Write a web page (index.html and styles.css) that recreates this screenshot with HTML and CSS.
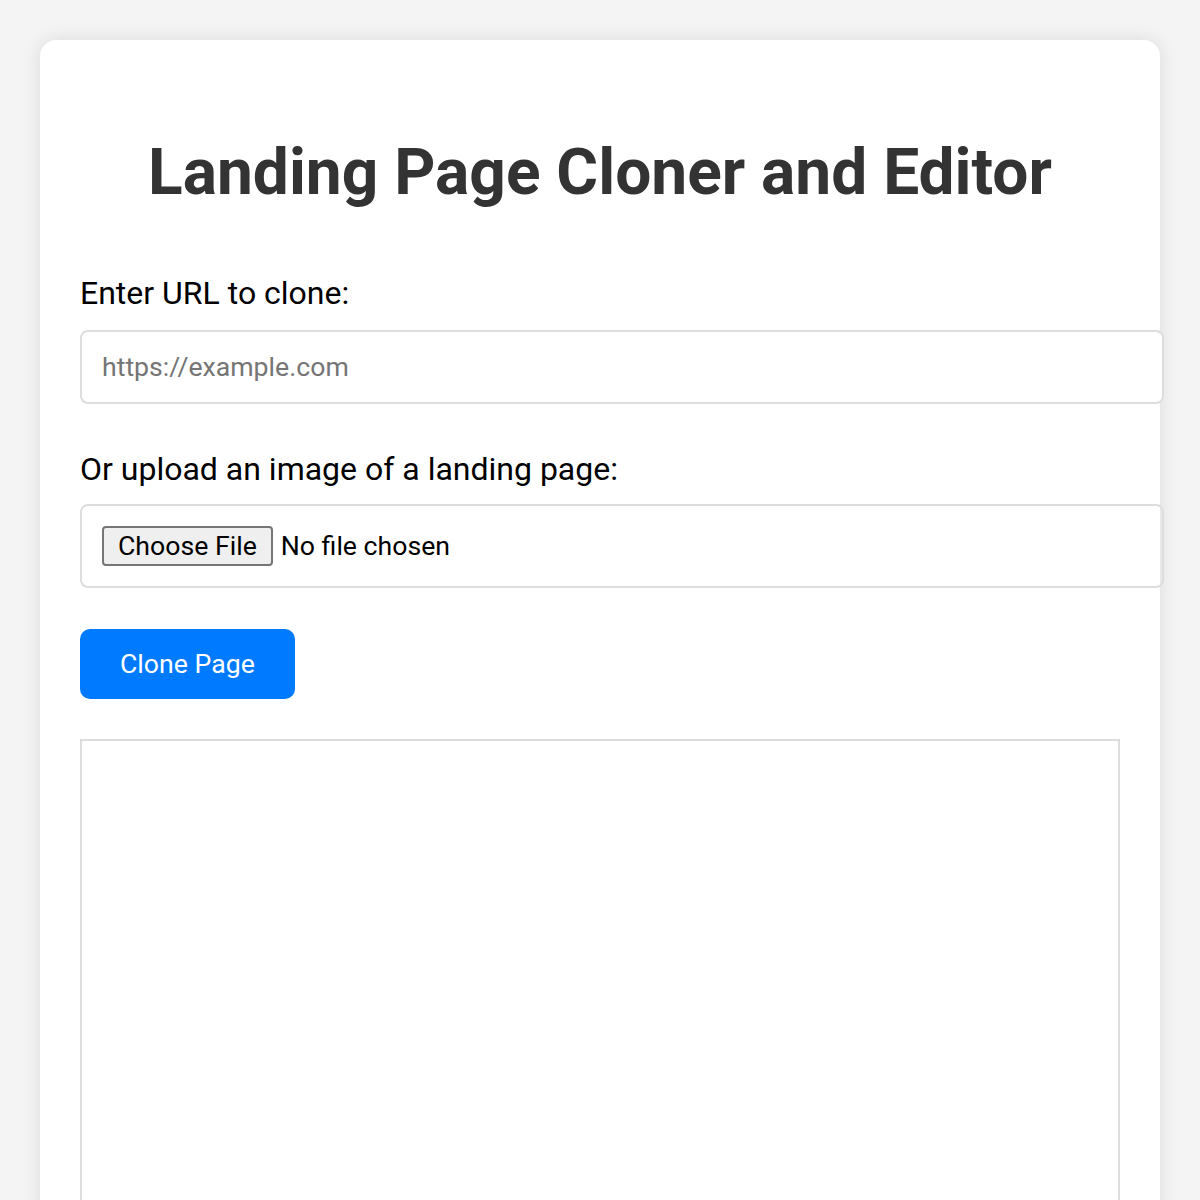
FILE: index.html
```html
<!DOCTYPE html>
<html lang="en">
<head>
<meta charset="utf-8">
<title>Landing Page Cloner and Editor</title>
<link rel="stylesheet" href="styles.css">
</head>
<body>
<div class="container">
  <h1 class="title">Landing Page Cloner and Editor</h1>
  <label class="field-label" for="url">Enter URL to clone:</label>
  <input class="text-input" id="url" type="text" placeholder="https://example.com">
  <label class="field-label file-label" for="file">Or upload an image of a landing page:</label>
  <input class="file-input" id="file" type="file">
  <button class="clone-btn" type="button">Clone Page</button>
  <div class="preview"></div>
</div>
</body>
</html>
```
FILE: styles.css
```css
html, body {
  margin: 0;
  padding: 0;
  background: #f4f4f4;
  font-family: Roboto, "Liberation Sans", sans-serif;
  height: 1200px;
  overflow: hidden;
}

.container {
  width: 1040px;
  margin: 40px auto 0;
  padding: 40px;
  background: #ffffff;
  border-radius: 16px;
  box-shadow: 0 0 20px rgba(0, 0, 0, 0.1);
}

.title {
  font-size: 64px;
  font-weight: 700;
  color: #333333;
  text-align: center;
  margin: 55px 0 65px;
  line-height: 75px;
}

.field-label {
  display: block;
  font-size: 32px;
  line-height: 37px;
  color: #000000;
  margin-bottom: 18px;
}

.field-label.file-label {
  margin-bottom: 16px;
}

.text-input {
  display: block;
  width: 1040px;
  padding: 20px;
  border: 2px solid #dddddd;
  border-radius: 8px;
  font-family: Roboto, "Liberation Sans", sans-serif;
  font-size: 26.67px;
  line-height: 30px;
  color: #000;
  margin: 0 0 47px;
  outline: none;
}

.text-input::placeholder {
  color: #757575;
}

.file-input {
  display: block;
  box-sizing: border-box;
  width: 1084px;
  height: 84px;
  padding: 20px;
  border: 2px solid #dddddd;
  border-radius: 8px;
  font-family: Roboto, "Liberation Sans", sans-serif;
  font-size: 26.67px;
  line-height: 40px;
  color: #000;
  margin: 0 0 41px;
}

.file-input::file-selector-button {
  font-family: Roboto, "Liberation Sans", sans-serif;
  font-size: 26.67px;
  height: 40px;
  padding: 0 14px;
  border: 2px solid #767676;
  border-radius: 4px;
  background: #efefef;
  color: #000;
  margin-right: 8px;
}

.clone-btn {
  display: block;
  padding: 20px 40px;
  border: none;
  border-radius: 10px;
  background: #007bff;
  color: #ffffff;
  font-family: Roboto, "Liberation Sans", sans-serif;
  font-size: 26.67px;
  line-height: 30px;
  margin: 0 0 40px;
  cursor: pointer;
}

.preview {
  height: 600px;
  border: 2px solid #dddddd;
  background: #fff;
}
```
